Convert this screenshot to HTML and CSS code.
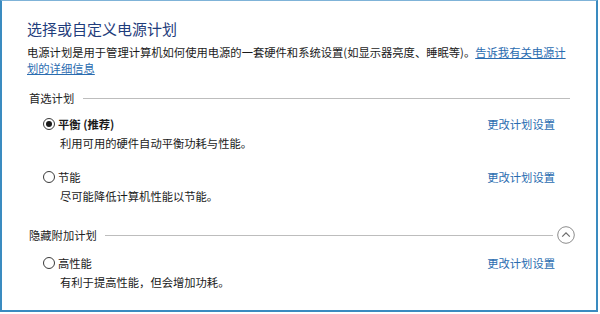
FILE: index.html
```html
<!DOCTYPE html>
<html lang="zh-CN">
<head>
<meta charset="utf-8">
<title>选择或自定义电源计划</title>
<link rel="stylesheet" href="styles.css">
</head>
<body>
<div class="window">
  <h1 class="title">选择或自定义电源计划</h1>
  <p class="intro">电源计划是用于管理计算机如何使用电源的一套硬件和系统设置(如显示器亮度、睡眠等)。<a class="link" href="#">告诉我有关电源计划的详细信息</a></p>

  <div class="section">
    <span class="section-label">首选计划</span>
    <span class="rule"></span>
  </div>

  <div class="plan">
    <div class="plan-row">
      <label class="plan-name bold"><span class="radio checked"></span>平衡 (推荐)</label>
      <a class="link plain" href="#">更改计划设置</a>
    </div>
    <div class="plan-desc">利用可用的硬件自动平衡功耗与性能。</div>
  </div>

  <div class="plan gap">
    <div class="plan-row">
      <label class="plan-name"><span class="radio"></span>节能</label>
      <a class="link plain" href="#">更改计划设置</a>
    </div>
    <div class="plan-desc">尽可能降低计算机性能以节能。</div>
  </div>

  <div class="section section-2">
    <span class="section-label">隐藏附加计划</span>
    <span class="rule short"></span>
    <span class="collapse">
      <svg width="18" height="18" viewBox="0 0 18 18"><circle cx="9" cy="9" r="8.3" fill="#fff" stroke="#8c8c8c" stroke-width="1"/><polyline points="5.2,10.6 9,6.8 12.8,10.6" fill="none" stroke="#6a6a6a" stroke-width="1.2"/></svg>
    </span>
  </div>

  <div class="plan plan-3">
    <div class="plan-row">
      <label class="plan-name"><span class="radio"></span>高性能</label>
      <a class="link plain" href="#">更改计划设置</a>
    </div>
    <div class="plan-desc">有利于提高性能，但会增加功耗。</div>
  </div>
</div>
</body>
</html>
```

FILE: styles.css
```css
html, body {
  margin: 0;
  padding: 0;
  background: #ffffff;
}

body {
  font-family: "Noto Sans CJK SC", "Noto Sans", sans-serif;
  font-size: 11.3px;
  color: #1a1a1a;
}

.window {
  box-sizing: border-box;
  width: 598px;
  height: 312px;
  border-top: 1px solid #7fb3d8;
  border-left: 2px solid #3a8bc0;
  border-right: 2px solid #3a8bc0;
  border-bottom: 2px solid #3a8bc0;
  padding: 18px 21px 0 25px;
  background: #ffffff;
}

.title {
  margin: 0;
  font-size: 15px;
  font-weight: normal;
  line-height: 20px;
  color: #1f3d7c;
}

.intro {
  margin: 5px 0 0 0;
  line-height: 16px;
  width: 546px;
}

.link {
  color: #2a6cb0;
  text-decoration: underline;
}

.link.plain {
  text-decoration: none;
}

.section {
  display: flex;
  align-items: center;
  height: 18px;
  margin: 13px 0 0 2px;
  color: #222;
}

.section-label {
  line-height: 16px;
}

.rule {
  flex: 1;
  height: 1px;
  background: #bdbdbd;
  margin: 0 5px 0 9px;
}

.rule.short {
  margin: 0 4px 0 8px;
}

.collapse {
  display: flex;
  width: 18px;
  height: 18px;
}

.section-2 {
  margin-top: 22px;
}

.plan {
  margin: 9px 20px 0 16px;
}

.plan.gap {
  margin-top: 18px;
}

.plan.plan-3 {
  margin-top: 11px;
}

.plan-row {
  display: flex;
  justify-content: space-between;
  align-items: center;
  line-height: 16px;
}

.plan-name {
  display: flex;
  align-items: center;
}

.bold {
  font-weight: bold;
}

.radio {
  box-sizing: border-box;
  width: 12px;
  height: 12px;
  border: 1px solid #3a3a3a;
  border-radius: 50%;
  margin-right: 3px;
  display: flex;
  align-items: center;
  justify-content: center;
  background: #fff;
}

.radio.checked::after {
  content: "";
  width: 6px;
  height: 6px;
  border-radius: 50%;
  background: #1a1a1a;
}

.plan-desc {
  margin: 3px 0 0 17px;
  line-height: 16px;
}
```
